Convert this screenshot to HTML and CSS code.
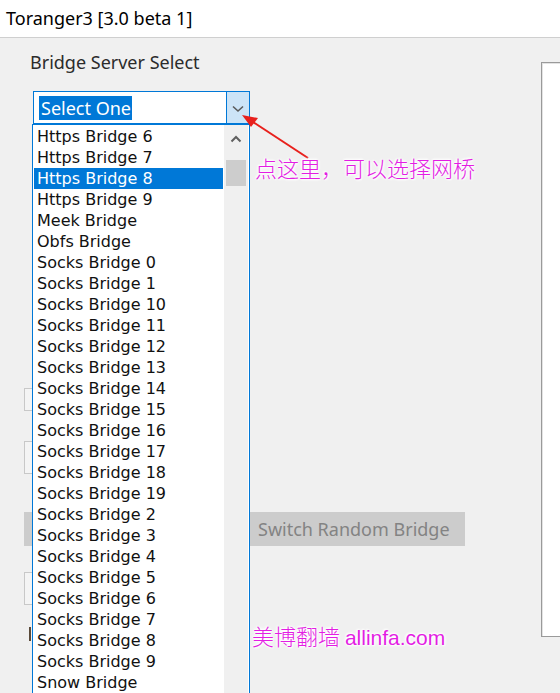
FILE: index.html
```html
<!DOCTYPE html>
<html>
<head>
<meta charset="utf-8">
<link rel="stylesheet" href="styles.css">
</head>
<body>
<div class="window">
  <div class="titlebar">Toranger3 [3.0 beta 1]</div>
  <div class="client">
    <div class="left">
      <div class="group-label">Bridge Server Select</div>
      <div class="combo">
        <div class="combo-field"><span class="combo-sel">Select One</span></div>
        <div class="combo-btn">
          <svg width="12" height="8" viewBox="0 0 12 8"><path d="M1 1.5 L6 6 L11 1.5" fill="none" stroke="#5a5a5a" stroke-width="1.6"/></svg>
        </div>
      </div>
      <div class="ctl ctl-a"></div>
      <div class="ctl ctl-b"></div>
      <div class="btn-row">
        <div class="btn btn-hidden"></div>
        <div class="btn">Switch Random Bridge</div>
      </div>
      <div class="ctl ctl-c"></div>
      <div class="label-stub"></div>

      <div class="dropdown">
        <ul class="items">
          <li>Https Bridge 6</li>
          <li>Https Bridge 7</li>
          <li class="selected">Https Bridge 8</li>
          <li>Https Bridge 9</li>
          <li>Meek Bridge</li>
          <li>Obfs Bridge</li>
          <li>Socks Bridge 0</li>
          <li>Socks Bridge 1</li>
          <li>Socks Bridge 10</li>
          <li>Socks Bridge 11</li>
          <li>Socks Bridge 12</li>
          <li>Socks Bridge 13</li>
          <li>Socks Bridge 14</li>
          <li>Socks Bridge 15</li>
          <li>Socks Bridge 16</li>
          <li>Socks Bridge 17</li>
          <li>Socks Bridge 18</li>
          <li>Socks Bridge 19</li>
          <li>Socks Bridge 2</li>
          <li>Socks Bridge 3</li>
          <li>Socks Bridge 4</li>
          <li>Socks Bridge 5</li>
          <li>Socks Bridge 6</li>
          <li>Socks Bridge 7</li>
          <li>Socks Bridge 8</li>
          <li>Socks Bridge 9</li>
          <li>Snow Bridge</li>
        </ul>
        <div class="scrollbar">
          <div class="sb-up">
            <svg width="12" height="8" viewBox="0 0 12 8"><path d="M1.5 6.5 L6 2 L10.5 6.5" fill="none" stroke="#606060" stroke-width="2"/></svg>
          </div>
          <div class="sb-thumb"></div>
        </div>
      </div>
    </div>
    <div class="right-panel"></div>
  </div>
</div>

<svg class="arrow" width="80" height="60" viewBox="0 0 80 60">
  <line x1="68" y1="46" x2="10" y2="8" stroke="#e8201c" stroke-width="2"/>
  <path d="M2 3 L18 6 L11 15 Z" fill="#e8201c"/>
</svg>
<div class="note note-1">点这里，可以选择网桥</div>
<div class="note note-2">美博翻墙 <span class="latin">allinfa.com</span></div>
</body>
</html>
```
FILE: styles.css
```css
html, body {
  margin: 0;
  padding: 0;
  width: 560px;
  height: 693px;
  overflow: hidden;
  font-family: "Noto Sans", "Noto Sans CJK SC", sans-serif;
}

.window {
  display: flex;
  flex-direction: column;
  height: 693px;
}

.titlebar {
  height: 37px;
  flex: none;
  background: #ffffff;
  border-bottom: 1px solid #cfcfcf;
  padding-left: 6px;
  font-size: 18px;
  line-height: 36px;
  color: #000;
}

.client {
  flex: 1;
  display: flex;
  background: #f0f0f0;
}

.left {
  position: relative;
  width: 541px;
  flex: none;
  display: flex;
  flex-direction: column;
  align-items: flex-start;
}

.group-label {
  margin: 12px 0 0 30px;
  font-size: 18px;
  line-height: 24px;
  color: #2b2b2b;
}

.combo {
  margin: 17px 0 0 33px;
  width: 217px;
  height: 33px;
  box-sizing: border-box;
  border: 1px solid #0078d7;
  display: flex;
  background: #fff;
}

.combo-field {
  flex: 1;
  display: flex;
  align-items: center;
  padding-left: 5px;
}

.combo-sel {
  background: #0078d7;
  color: #fff;
  font-size: 18px;
  line-height: 24px;
  padding: 0 1px 0 2px;
}

.combo-btn {
  width: 23px;
  background: #cce4f7;
  border-left: 1px solid #0078d7;
  display: flex;
  align-items: center;
  justify-content: center;
  padding-top: 2px;
  box-sizing: border-box;
}

.ctl {
  margin-left: 24px;
  width: 200px;
  box-sizing: border-box;
  border: 1px solid #c8c8c8;
  background: #f4f4f4;
}

.ctl-a { margin-top: 264px; height: 23px; }
.ctl-b { margin-top: 30px; height: 33px; }
.ctl-c { margin-top: 26px; height: 33px; }

.btn-row {
  margin: 38px 0 0 24px;
  display: flex;
  gap: 10px;
}

.btn {
  height: 34px;
  background: #cccccc;
  color: #838383;
  font-size: 18px;
  line-height: 34px;
  width: 215px;
  box-sizing: border-box;
  padding: 0 0 0 8px;
  white-space: nowrap;
}

.btn-hidden {
  width: 216px;
  padding: 0;
}

.label-stub {
  margin: 22px 0 0 29px;
  width: 2px;
  height: 14px;
  background: #5a4a3a;
}

.dropdown {
  position: absolute;
  left: 32px;
  top: 86px;
  width: 218px;
  height: 600px;
  box-sizing: border-box;
  border: 1px solid #0078d7;
  background: #ffffff;
  display: flex;
}

.items {
  list-style: none;
  margin: 0;
  padding: 1px 1px 0 1px;
  flex: 1;
}

.items li {
  height: 21px;
  line-height: 21px;
  padding-left: 3px;
  font-family: "DejaVu Sans", sans-serif;
  font-size: 16px;
  color: #111;
  white-space: nowrap;
}

.items li.selected {
  background: #0078d7;
  color: #fff;
}

.scrollbar {
  width: 24px;
  background: #f0f0f0;
  display: flex;
  flex-direction: column;
  align-items: center;
  margin-right: 1px;
}

.sb-up {
  height: 28px;
  display: flex;
  align-items: center;
  justify-content: center;
}

.sb-thumb {
  margin-top: 7px;
  width: 20px;
  height: 26px;
  background: #cdcdcd;
}

.right-panel {
  flex: 1;
  margin-top: 24px;
  height: 575px;
  box-sizing: border-box;
  background: #ffffff;
  border: 1px solid #9a9a9a;
  border-right: none;
  box-shadow: inset 1px 1px 0 #e3e3e3;
}

.arrow {
  position: absolute;
  left: 240px;
  top: 112px;
}

.note {
  position: absolute;
  color: #e31ee3;
  font-size: 22px;
  line-height: 28px;
  font-family: "Noto Sans CJK SC", sans-serif;
  font-weight: 300;
  white-space: nowrap;
  text-shadow: 0 0 2px #fff, 0 0 3px #fff, 0 0 4px #fff, 1px 1px 2px #fff, -1px -1px 2px #fff;
}

.note-1 {
  left: 255px;
  top: 153px;
}

.note-2 {
  left: 252px;
  top: 621px;
}

.latin {
  font-family: "Liberation Sans", sans-serif;
  font-weight: 400;
  font-size: 21px;
}
```
